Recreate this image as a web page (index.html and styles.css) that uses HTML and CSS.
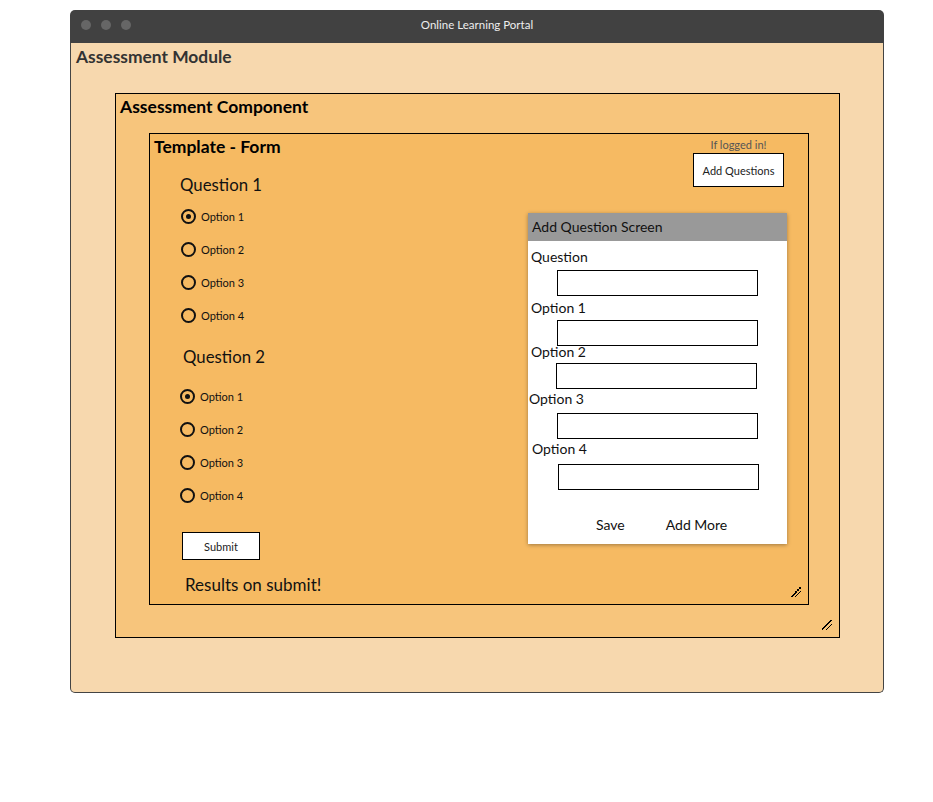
FILE: index.html
```html
<!DOCTYPE html>
<html>
<head>
<meta charset="utf-8">
<title>Online Learning Portal</title>
<link rel="stylesheet" href="styles.css">
</head>
<body>
<div class="page">
  <div class="window">
    <div class="titlebar">
      <div class="dots"><span class="dot"></span><span class="dot"></span><span class="dot"></span></div>
      <div class="wtitle">Online Learning Portal</div>
    </div>
    <div class="wbody">
      <h1 class="module-title">Assessment Module</h1>
      <div class="component">
        <h2 class="box-title">Assessment Component</h2>
        <div class="template">
          <div class="left">
            <h2 class="box-title tpl-title">Template - Form</h2>
            <div class="question q1">Question 1</div>
            <div class="options">
              <div class="opt"><span class="radio checked"></span>Option 1</div>
              <div class="opt"><span class="radio"></span>Option 2</div>
              <div class="opt"><span class="radio"></span>Option 3</div>
              <div class="opt"><span class="radio"></span>Option 4</div>
            </div>
            <div class="question q2">Question 2</div>
            <div class="options options2">
              <div class="opt"><span class="radio checked"></span>Option 1</div>
              <div class="opt"><span class="radio"></span>Option 2</div>
              <div class="opt"><span class="radio"></span>Option 3</div>
              <div class="opt"><span class="radio"></span>Option 4</div>
            </div>
            <button class="submit">Submit</button>
            <div class="results">Results on submit!</div>
          </div>
          <div class="right">
            <div class="logged">If logged in!</div>
            <button class="addq">Add Questions</button>
            <div class="panel">
              <div class="panel-head">Add Question Screen</div>
              <div class="lbl l-q">Question</div>
              <div class="inp i-q"></div>
              <div class="lbl l-o1">Option 1</div>
              <div class="inp i-o1"></div>
              <div class="lbl l-o2">Option 2</div>
              <div class="inp i-o2"></div>
              <div class="lbl l-o3">Option 3</div>
              <div class="inp i-o3"></div>
              <div class="lbl l-o4">Option 4</div>
              <div class="inp i-o4"></div>
              <div class="actions"><span>Save</span><span>Add More</span></div>
            </div>
          </div>
          <span class="grip"></span>
        </div>
        <span class="grip"></span>
      </div>
    </div>
  </div>
</div>
</body>
</html>
```

FILE: styles.css
```css
* { box-sizing: border-box; }
html, body { margin: 0; padding: 0; background: #fff; }
body { font-family: "Lato", "Open Sans", sans-serif; color: #111; }

.page { padding: 10px 0 0 70px; }
.window { width: 814px; }
.titlebar {
  height: 33px;
  background: #414141;
  border-radius: 5px 5px 0 0;
  display: flex;
  align-items: center;
  padding-bottom: 4px;
  position: relative;
}
.dots { display: flex; gap: 10px; padding-left: 11px; }
.dot { width: 10px; height: 10px; border-radius: 50%; background: #666; display: block; }
.wtitle {
  position: absolute; left: 0; right: 0; top: 8px; text-align: center;
  color: #eee; font-size: 11.5px; line-height: 14px;
}
.wbody {
  height: 650px;
  background: #f7d8ae;
  border: 1px solid #444;
  border-top: none;
  border-radius: 0 0 5px 5px;
  padding: 0 0 0 44px;
}
.module-title {
  margin: 0 0 0 -39px;
  padding-top: 3px;
  height: 50px;
  font-size: 17.4px;
  line-height: 22px;
  font-weight: 700;
  color: #333;
}
.component {
  position: relative;
  width: 725px;
  height: 545px;
  background: #f7c57c;
  border: 1px solid #000;
  padding: 0 0 0 33px;
}
.box-title {
  margin: 0 0 0 -29px;
  padding-top: 2px;
  height: 39px;
  font-size: 17.5px;
  line-height: 22px;
  font-weight: 700;
  color: #000;
}
.template {
  position: relative;
  width: 660px;
  height: 472px;
  background: #f6ba62;
  border: 1px solid #000;
  display: flex;
  justify-content: space-between;
}
.left { padding-left: 30px; }
.tpl-title { margin: 0 0 0 -26px; padding-top: 2px; height: 24px; }
.question { font-size: 16.8px; line-height: 22px; color: #111; }
.q1 { margin-top: 16px; margin-bottom: 4px; }
.q2 { margin-top: 14px; margin-bottom: 12px; padding-left: 3px; }
.opt {
  height: 33px;
  display: flex;
  align-items: center;
  font-size: 11px;
  color: #111;
  padding-left: 1px;
}
.options2 .opt { padding-left: 0; }
.radio {
  width: 15px; height: 15px;
  border: 2.5px solid #111;
  border-radius: 50%;
  margin-right: 5px;
  display: flex; align-items: center; justify-content: center;
}
.radio.checked::after {
  content: ""; width: 5px; height: 5px; border-radius: 50%; background: #111;
}
.submit {
  display: block;
  margin: 20px 0 0 2px;
  width: 78px; height: 28px;
  background: #fff;
  border: 1px solid #000;
  font-family: inherit;
  font-size: 11px;
  color: #222;
  padding: 0;
}
.results { margin: 14px 0 0 5px; font-size: 17px; line-height: 22px; color: #111; }

.right {
  display: flex; flex-direction: column; align-items: flex-end;
  padding-top: 4px; padding-right: 21px;
}
.logged { font-size: 11px; line-height: 14px; color: #555; width: 91px; text-align: center; margin-right: 3px; }
.addq {
  margin-top: 1px; margin-right: 3px;
  width: 91px; height: 34px;
  background: #fff; border: 1px solid #000;
  font-family: inherit; font-size: 11px; color: #222; padding: 0;
}
.panel {
  margin-top: 26px;
  width: 259px; height: 331px;
  background: #fff;
  box-shadow: 0 1px 4px rgba(0,0,0,0.35);
}
.panel-head {
  height: 28px; background: #999; color: #111;
  font-size: 14px; line-height: 27px; padding-left: 4px;
}
.lbl { font-size: 14px; line-height: 18px; color: #111; padding-left: 3px; }
.inp { height: 26px; width: 201px; border: 1px solid #000; margin-left: 29px; }
.l-q { margin-top: 7px; }
.i-q { margin-top: 4px; }
.l-o1 { margin-top: 3px; }
.i-o1 { margin-top: 3px; }
.l-o2 { margin-top: -3px; }
.i-o2 { margin-top: 2px; margin-left: 28px; }
.l-o3 { margin-top: 1px; padding-left: 1px; }
.i-o3 { margin-top: 5px; }
.l-o4 { margin-top: 1px; padding-left: 4px; }
.i-o4 { margin-top: 6px; margin-left: 30px; }
.actions {
  margin-top: 25px;
  display: flex; gap: 41px; padding-left: 68px;
  font-size: 14px; line-height: 20px; color: #111;
}

.grip {
  position: absolute; right: 7px; bottom: 7px;
  width: 10px; height: 10px;
  background:
    linear-gradient(135deg, transparent 45%, #000 45%, #000 55%, transparent 55%) 0 0 / 10px 10px no-repeat,
    linear-gradient(135deg, transparent 45%, #000 45%, #000 55%, transparent 55%) 4px 4px / 6px 6px no-repeat;
}
```
